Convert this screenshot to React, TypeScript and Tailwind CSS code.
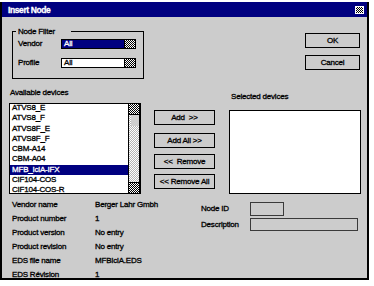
import React from 'react';

const DEVICES = [
  'ATVS8_E',
  'ATVS8_F',
  'ATVS8F_E',
  'ATVS8F_F',
  'CBM-A14',
  'CBM-A04',
  'MFB_IclA-IFX',
  'CIF104-COS',
  'CIF104-COS-R',
];
const SELECTED = 6;

const INFO = [
  ['Vendor name', 'Berger Lahr Gmbh'],
  ['Product number', '1'],
  ['Product version', 'No entry'],
  ['Product revision', 'No entry'],
  ['EDS file name', 'MFBIclA.EDS'],
  ['EDS Révision', '1'],
];

const DITHER =
  'bg-[image:repeating-conic-gradient(#000_0_25%,#fff_0_50%)] bg-[length:2px_2px]';

const Btn = ({ label, className = '' }: { label: string; className?: string }) => (
  <div
    className={`h-[15px] border border-black flex items-center justify-center whitespace-pre ${className}`}
  >
    {label}
  </div>
);

const Combo = ({ value, active }: { value: string; active?: boolean }) => (
  <div
    className={`w-[75px] h-[10px] border border-black flex items-stretch ${
      active ? 'bg-[#000080] text-white' : 'bg-white text-black'
    }`}
  >
    <span className="flex-1 pl-[2px] leading-[8px]">{value}</span>
    <span className={`w-[11px] border-l border-black ${DITHER}`} />
  </div>
);

export default function App() {
  return (
    <div className="w-[374px] h-[286px] bg-white pt-[2px] font-['Liberation_Sans',Arial,sans-serif] text-[8px] tracking-[-0.2px] leading-[10px] text-black [-webkit-text-stroke-width:0.3px]">
      <div className="w-[369px] h-[278px] bg-[#cccccc] border-x-2 border-b-2 border-black flex flex-col overflow-hidden">
        {/* Title bar */}
        <div className="h-[15px] shrink-0 bg-[#000080] flex items-center justify-between pl-[6px] pr-[3px]">
          <span className="text-white font-bold text-[8.5px] tracking-[-0.4px]">Insert Node</span>
          <span className={`w-[9px] h-[8px] mt-[1px] border border-white ${DITHER}`} />
        </div>

        {/* Filter + OK / Cancel */}
        <div className="flex mt-[9px] shrink-0">
          <fieldset className="ml-[10px] w-[132px] h-[53px] border border-black p-0 pt-[2px] m-0 min-w-0">
            <legend className="ml-[3px] pl-[2px] pr-[16px] leading-[11px]">Node Filter</legend>
            <div className="flex items-center h-[10px]">
              <span className="w-[48px] pl-[5px]">Vendor</span>
              <Combo value="All" active />
            </div>
            <div className="flex items-center h-[10px] mt-[9px]">
              <span className="w-[48px] pl-[5px]">Profile</span>
              <Combo value="All" />
            </div>
          </fieldset>
          <div className="ml-auto mr-[7px] mt-[7px] flex flex-col gap-[7px]">
            <Btn label="OK" className="w-[55px]" />
            <Btn label="Cancel" className="w-[55px]" />
          </div>
        </div>

        {/* Device lists */}
        <div className="flex mt-[9px] shrink-0">
          <div className="ml-[7px] w-[132px] flex flex-col">
            <span className="pl-[1px] h-[10px]">Available devices</span>
            <div className="mt-[5px] h-[91px] bg-white border-l border-t border-b border-r-2 border-black flex overflow-hidden">
              <div className="flex-1 min-w-0 overflow-hidden">
                <div className="-mt-[1px]">
                  {DEVICES.map((d, i) => (
                    <div
                      key={d}
                      className={`h-[10.25px] leading-[10.25px] pl-[2px] whitespace-nowrap ${
                        i === SELECTED ? 'bg-[#000080] text-white' : ''
                      }`}
                    >
                      {d}
                    </div>
                  ))}
                </div>
              </div>
              <div className="w-[11px] border-l border-black flex flex-col">
                <span className={`h-[11px] border-b border-black ${DITHER}`} />
                <div className="flex-1 flex flex-col bg-[image:repeating-conic-gradient(#b4b4b4_0_25%,#fff_0_50%)] bg-[length:2px_2px]">
                  <span className="h-[11px] ml-[2px] bg-[#cfcfcf]" />
                </div>
                <span className={`h-[11px] border-t border-black ${DITHER}`} />
              </div>
            </div>
          </div>

          <div className="ml-[13px] w-[61px] mt-[22px] flex flex-col">
            <Btn label="Add  >>" />
            <Btn label="Add All >>" className="mt-[8px]" />
            <Btn label="<<  Remove" className="mt-[6px]" />
            <Btn label="<< Remove All" className="mt-[5px]" />
          </div>

          <div className="ml-[14px] w-[132px] flex flex-col">
            <span className="mt-[4px] pl-[2px] h-[10px]">Selected devices</span>
            <div className="mt-[8px] h-[84px] bg-white border border-black" />
          </div>
        </div>

        {/* Device info */}
        <div className="flex mt-[4px] shrink-0">
          <div className="ml-[10px] w-[189px] grid grid-cols-[83px_auto]">
            {INFO.map(([k, v]) => (
              <React.Fragment key={k}>
                <span className="h-[14px] leading-[14px] whitespace-nowrap">{k}</span>
                <span className="h-[14px] leading-[14px] whitespace-nowrap">{v}</span>
              </React.Fragment>
            ))}
          </div>
          <div className="mt-[4px] grid grid-cols-[49px_auto] items-center h-fit">
            <span>Node ID</span>
            <span className="w-[34px] h-[14px] border border-[#3a3a3a]" />
            <span className="mt-[2px]">Description</span>
            <span className="mt-[2px] w-[108px] h-[13px] border border-[#3a3a3a]" />
          </div>
        </div>
      </div>
    </div>
  );
}
